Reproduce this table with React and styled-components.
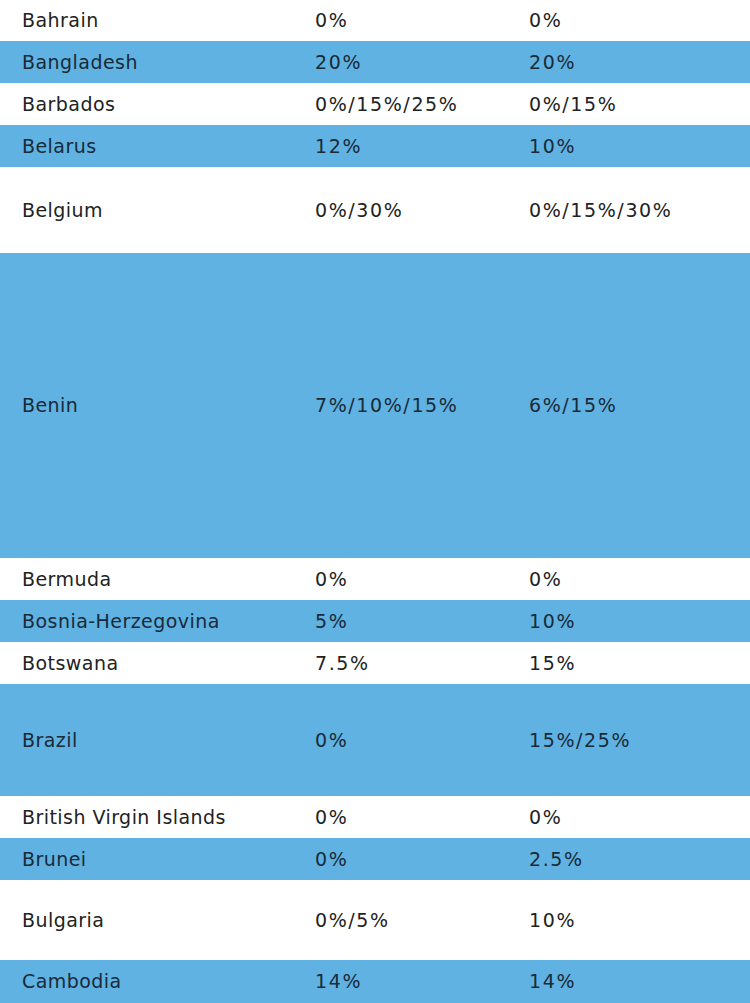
import React from "react";
import styled, { createGlobalStyle } from "styled-components";

const rows = [
  ["Bahrain", "0%", "0%", 41],
  ["Bangladesh", "20%", "20%", 42],
  ["Barbados", "0%/15%/25%", "0%/15%", 42],
  ["Belarus", "12%", "10%", 42],
  ["Belgium", "0%/30%", "0%/15%/30%", 86],
  ["Benin", "7%/10%/15%", "6%/15%", 305],
  ["Bermuda", "0%", "0%", 42],
  ["Bosnia-Herzegovina", "5%", "10%", 42],
  ["Botswana", "7.5%", "15%", 42],
  ["Brazil", "0%", "15%/25%", 112],
  ["British Virgin Islands", "0%", "0%", 42],
  ["Brunei", "0%", "2.5%", 42],
  ["Bulgaria", "0%/5%", "10%", 80],
  ["Cambodia", "14%", "14%", 43],
];

const App = () => {
  return (
    <>
      <GlobalStyle />
      <Table>
        {rows.map(([country, a, b, h], i) => (
          <Row key={country} $height={h} $striped={i % 2 === 1}>
            <Cell>{country}</Cell>
            <Cell $numeric>{a}</Cell>
            <Cell $numeric>{b}</Cell>
          </Row>
        ))}
      </Table>
    </>
  );
};

export default App;

const GlobalStyle = createGlobalStyle`
  body {
    margin: 0;
    background: #ffffff;
    font-family: "DejaVu Sans", Verdana, sans-serif;
  }
`;

const Table = styled.div`
  width: 750px;
  display: flex;
  flex-direction: column;
`;

const Row = styled.div`
  display: grid;
  grid-template-columns: 293px 214px 1fr;
  align-items: center;
  height: ${({ $height }) => $height}px;
  background: ${({ $striped }) => ($striped ? "#5fb2e1" : "#ffffff")};
  color: ${({ $striped }) => ($striped ? "#1a2a38" : "#222222")};
`;

const Cell = styled.div`
  padding-left: 22px;
  padding-bottom: 1px;
  font-size: 19px;
  letter-spacing: ${({ $numeric }) => ($numeric ? "1.6px" : "0.45px")};
  white-space: nowrap;
`;
